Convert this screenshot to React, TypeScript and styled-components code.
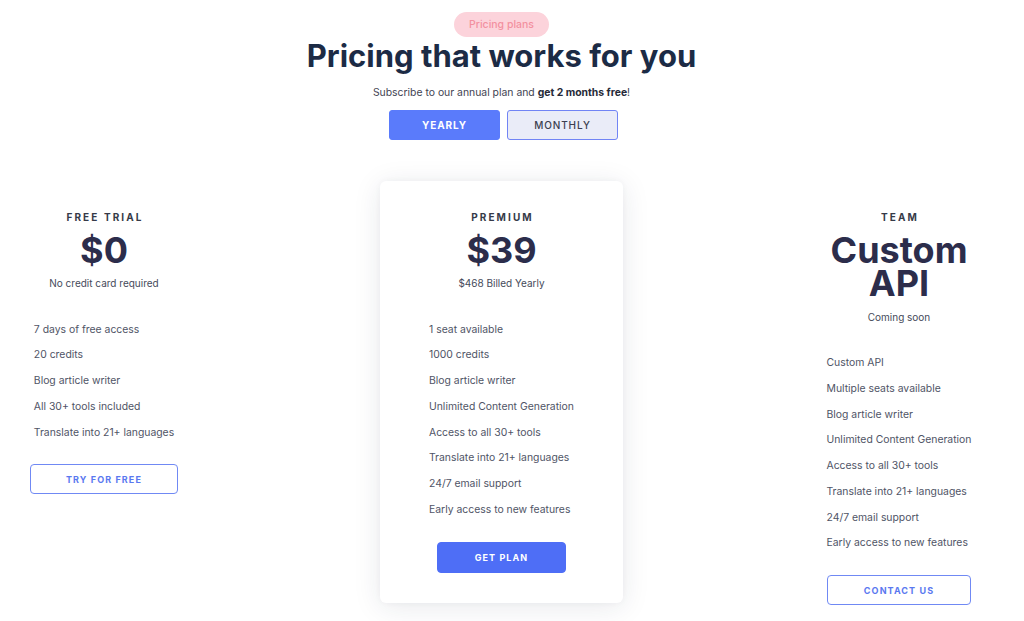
import React from "react";
import styled, { createGlobalStyle } from "styled-components";

const Global = createGlobalStyle`
  html, body { margin: 0; padding: 0; background: #ffffff; }
  body { font-family: Inter, "Noto Sans", Arial, sans-serif; -webkit-font-smoothing: antialiased; }
  * { box-sizing: border-box; }
`;

const Page = styled.main`
  width: 1003px;
  padding-top: 12px;
  display: flex;
  flex-direction: column;
  align-items: center;
`;

const Badge = styled.span`
  display: inline-flex;
  align-items: center;
  justify-content: center;
  height: 25px;
  padding: 0 15px;
  border-radius: 13px;
  background: #fcd3db;
  color: #f3909f;
  font-size: 10.5px;
  font-weight: 500;
`;

const Title = styled.h1`
  margin: 1px 0 0;
  font-size: 31px;
  line-height: 36px;
  font-weight: 700;
  color: #1c2b45;
`;

const Subtitle = styled.p`
  margin: 11px 0 0;
  font-size: 10.4px;
  line-height: 16px;
  color: #3f4352;
  b { font-weight: 700; color: #262a38; }
`;

const Toggle = styled.div`
  display: flex;
  gap: 7px;
  margin: 9px 0 0 4px;
`;

const ToggleButton = styled.button<{ $active?: boolean }>`
  width: 111px;
  height: 30px;
  border-radius: 3px;
  font-family: inherit;
  font-size: 10px;
  letter-spacing: 0.9px;
  font-weight: ${(p) => (p.$active ? 700 : 500)};
  color: ${(p) => (p.$active ? "#ffffff" : "#3b3e50")};
  background: ${(p) => (p.$active ? "#5a7bfb" : "#eaecf8")};
  border: 1px solid ${(p) => (p.$active ? "#5a7bfb" : "#7184f5")};
  cursor: pointer;
`;

const Plans = styled.section`
  margin-top: 41px;
  display: grid;
  grid-template-columns: 208px 243px 208px;
  column-gap: 172px;
  align-items: start;
  align-self: flex-start;
`;

const Plan = styled.div<{ $featured?: boolean }>`
  display: flex;
  flex-direction: column;
  align-items: center;
  padding: 30px 0 30px;
  background: ${(p) => (p.$featured ? "#ffffff" : "transparent")};
  border-radius: 6px;
  box-shadow: ${(p) =>
    p.$featured ? "0 4px 28px rgba(30, 40, 70, 0.10), 0 0 6px rgba(30,40,70,0.04)" : "none"};
`;

const PlanName = styled.h3`
  margin: 0;
  font-size: 10px;
  line-height: 12px;
  font-weight: 700;
  letter-spacing: 2.1px;
  color: #363a48;
  padding-left: 2px;
`;

const Price = styled.div`
  margin-top: 10.5px;
  font-size: 36px;
  line-height: 33.5px;
  font-weight: 700;
  color: #2c2d4b;
  text-align: center;
`;

const PriceNote = styled.div`
  margin-top: 9px;
  font-size: 10px;
  line-height: 14px;
  color: #454a5a;
`;

const Features = styled.ul`
  list-style: none;
  margin: 26.5px 0 0;
  padding: 0;
  text-align: left;
`;

const Feature = styled.li`
  font-size: 10.4px;
  line-height: 25.75px;
  color: #4f5466;
  white-space: nowrap;
`;

const ActionButton = styled.button<{ $solid?: boolean; $w: number }>`
  margin-top: 19px;
  width: ${(p) => p.$w}px;
  height: ${(p) => (p.$solid ? 31 : 30)}px;
  border-radius: 4px;
  font-family: inherit;
  font-size: 9px;
  font-weight: 700;
  letter-spacing: 1.1px;
  color: ${(p) => (p.$solid ? "#ffffff" : "#5a78f0")};
  background: ${(p) => (p.$solid ? "#4e6ef6" : "#ffffff")};
  border: 1px solid ${(p) => (p.$solid ? "#4e6ef6" : "#7089f4")};
  cursor: pointer;
`;

type PlanData = {
  name: string;
  price: React.ReactNode;
  note: string;
  features: string[];
  cta: string;
  solid?: boolean;
  featured?: boolean;
  width: number;
};

const plans: PlanData[] = [
  {
    name: "FREE TRIAL",
    price: "$0",
    note: "No credit card required",
    features: [
      "7 days of free access",
      "20 credits",
      "Blog article writer",
      "All 30+ tools included",
      "Translate into 21+ languages",
    ],
    cta: "TRY FOR FREE",
    width: 148,
  },
  {
    name: "PREMIUM",
    price: "$39",
    note: "$468 Billed Yearly",
    features: [
      "1 seat available",
      "1000 credits",
      "Blog article writer",
      "Unlimited Content Generation",
      "Access to all 30+ tools",
      "Translate into 21+ languages",
      "24/7 email support",
      "Early access to new features",
    ],
    cta: "GET PLAN",
    solid: true,
    featured: true,
    width: 129,
  },
  {
    name: "TEAM",
    price: (
      <>
        Custom
        <br />
        API
      </>
    ),
    note: "Coming soon",
    features: [
      "Custom API",
      "Multiple seats available",
      "Blog article writer",
      "Unlimited Content Generation",
      "Access to all 30+ tools",
      "Translate into 21+ languages",
      "24/7 email support",
      "Early access to new features",
    ],
    cta: "CONTACT US",
    width: 144,
  },
];

export default function App() {
  return (
    <>
      <Global />
      <Page>
        <Badge>Pricing plans</Badge>
        <Title>Pricing that works for you</Title>
        <Subtitle>
          Subscribe to our annual plan and <b>get 2 months free</b>!
        </Subtitle>
        <Toggle>
          <ToggleButton $active>YEARLY</ToggleButton>
          <ToggleButton>MONTHLY</ToggleButton>
        </Toggle>
        <Plans>
          {plans.map((p) => (
            <Plan key={p.name} $featured={p.featured}>
              <PlanName>{p.name}</PlanName>
              <Price>{p.price}</Price>
              <PriceNote>{p.note}</PriceNote>
              <Features>
                {p.features.map((f) => (
                  <Feature key={f}>{f}</Feature>
                ))}
              </Features>
              <ActionButton $solid={p.solid} $w={p.width}>
                {p.cta}
              </ActionButton>
            </Plan>
          ))}
        </Plans>
      </Page>
    </>
  );
}
